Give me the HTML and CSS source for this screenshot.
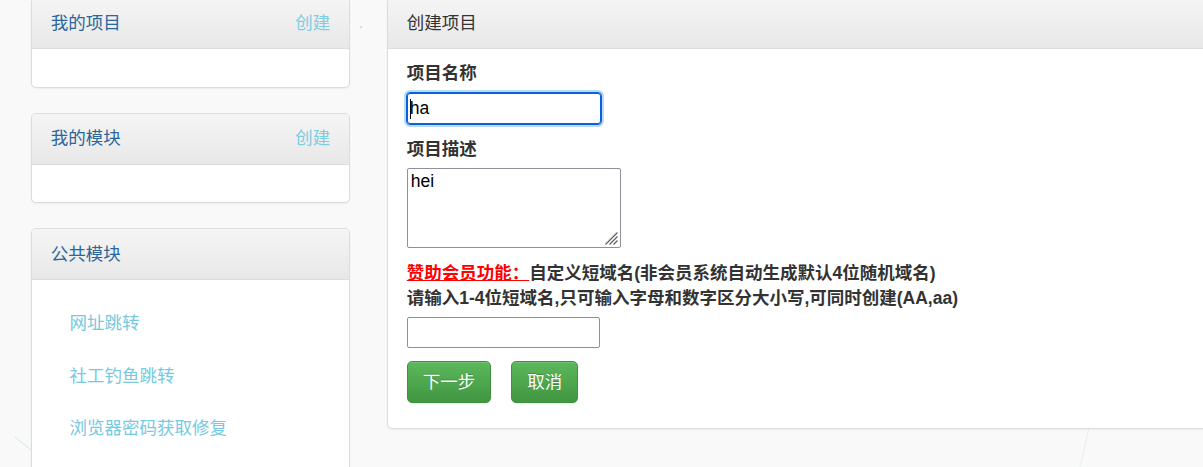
FILE: index.html
```html
<!DOCTYPE html>
<html lang="zh-CN">
<head>
<meta charset="utf-8">
<title>创建项目</title>
<link rel="stylesheet" href="styles.css">
</head>
<body>
<svg class="bg" width="1203" height="467" viewBox="0 0 1203 467" aria-hidden="true">
  <circle cx="361" cy="27" r="0.8" fill="#b9b9b9"/>
  <line x1="15" y1="437" x2="31" y2="450" stroke="#cfe9dc" stroke-width="1"/>
  <line x1="1089" y1="428" x2="1080" y2="467" stroke="#e4f1ee" stroke-width="1"/>
</svg>
<div class="page">
  <aside class="side">
    <section class="panel">
      <div class="panel-heading">
        <span class="side-title">我的项目</span>
        <a class="create">创建</a>
      </div>
      <div class="panel-body"></div>
    </section>
    <section class="panel">
      <div class="panel-heading">
        <span class="side-title">我的模块</span>
        <a class="create">创建</a>
      </div>
      <div class="panel-body"></div>
    </section>
    <section class="panel">
      <div class="panel-heading">
        <span class="side-title">公共模块</span>
      </div>
      <div class="panel-body">
        <ul class="nav">
          <li><a class="nav-link">网址跳转</a></li>
          <li><a class="nav-link">社工钓鱼跳转</a></li>
          <li><a class="nav-link">浏览器密码获取修复</a></li>
        </ul>
      </div>
    </section>
  </aside>
  <main class="main">
    <section class="panel main-panel">
      <div class="panel-heading">
        <span class="main-title">创建项目</span>
      </div>
      <div class="form-body">
        <label class="label">项目名称</label>
        <span class="field-wrap">
          <input class="input input-focus" type="text" value="ha">
          <span class="caret"></span>
        </span>
        <label class="label label-second">项目描述</label>
        <span class="field-wrap">
          <textarea class="textarea">hei</textarea>
          <svg class="grip" width="14" height="14" viewBox="0 0 14 14" aria-hidden="true">
            <line x1="13.5" y1="1.5" x2="1.5" y2="13.5" stroke="#5a5a5a" stroke-width="1.1"/>
            <line x1="13.5" y1="5.5" x2="5.5" y2="13.5" stroke="#5a5a5a" stroke-width="1.1"/>
            <line x1="13.5" y1="9.5" x2="9.5" y2="13.5" stroke="#5a5a5a" stroke-width="1.1"/>
            <line x1="11.5" y1="1.5" x2="-0.5" y2="13.5" stroke="#c8c8c8" stroke-width="0.8" stroke-dasharray="1 1"/>
          </svg>
        </span>
        <p class="note"><span class="vip">赞助会员功能：</span>自定义短域名(非会员系统自动生成默认4位随机域名)<br>请输入1-4位短域名,只可输入字母和数字区分大小写,可同时创建(AA,aa)</p>
        <input class="input input-short" type="text" value="">
        <div class="actions">
          <button class="btn" type="button">下一步</button>
          <button class="btn" type="button">取消</button>
        </div>
      </div>
    </section>
  </main>
</div>
</body>
</html>
```

FILE: styles.css
```css
html, body {
  margin: 0;
  padding: 0;
  overflow: hidden;
}
body {
  background: #f9f9f9;
  font-family: "Liberation Sans", "Noto Sans CJK SC", sans-serif;
  font-size: 17.5px;
  line-height: 25px;
  color: #333;
  width: 1203px;
  height: 467px;
}
.bg {
  position: absolute;
  left: 0;
  top: 0;
  z-index: -1;
}
.page {
  display: flex;
  align-items: flex-start;
  gap: 37px;
  padding-left: 31px;
  margin-top: -3px;
}
.side {
  width: 319px;
  flex: none;
  display: flex;
  flex-direction: column;
  gap: 25px;
}
.main {
  flex: none;
  width: 860px;
}
.panel {
  background: #fff;
  border: 1px solid #dcdcdc;
  border-radius: 5px;
  box-shadow: 0 1px 2px rgba(0, 0, 0, 0.05);
  overflow: hidden;
}
.panel-heading {
  display: flex;
  justify-content: space-between;
  align-items: center;
  padding: 12.5px 18.75px;
  height: 25px;
  background: linear-gradient(to bottom, #f5f5f5 0, #e8e8e8 100%);
  border-bottom: 1px solid #dcdcdc;
}
.side-title {
  color: #2b669a;
}
.create {
  color: #7dcde2;
}
.main-title {
  color: #333;
}
.panel-body {
  padding: 18.75px;
}
.nav {
  list-style: none;
  margin: 0;
  padding: 0;
  display: flex;
  flex-direction: column;
  gap: 2.5px;
}
.nav-link {
  display: block;
  padding: 12.5px 18.75px;
  color: #76c9df;
}
.form-body {
  display: flex;
  flex-direction: column;
  align-items: flex-start;
  padding: 12px 18.75px 25px;
}
.label {
  display: block;
  font-weight: bold;
  margin-bottom: 7px;
}
.label-second {
  margin-top: 12.5px;
  margin-bottom: 6.5px;
}
.field-wrap {
  position: relative;
  display: block;
}
.input {
  display: block;
  box-sizing: border-box;
  width: 194px;
  height: 31px;
  margin: 0;
  padding: 1px 2px;
  border: 1px solid #8f8f9d;
  border-radius: 2px;
  font-family: "Liberation Sans", "Noto Sans CJK SC", sans-serif;
  font-size: 17.5px;
  color: #000;
  background: #fff;
  outline: none;
}
.input-focus {
  border-color: #0b5fd8;
  border-radius: 3px;
  outline: 1px solid #0b5fd8;
  box-shadow: 0 0 0 3px #b9dcf6;
}
.caret {
  position: absolute;
  left: 3.5px;
  top: 6px;
  width: 1px;
  height: 20px;
  background: #000;
}
.textarea {
  display: block;
  box-sizing: border-box;
  width: 214px;
  height: 80px;
  margin: 0;
  padding: 2px 3px;
  border: 1px solid #8f8f9d;
  border-radius: 2px;
  font-family: "Liberation Sans", "Noto Sans CJK SC", sans-serif;
  font-size: 17.5px;
  line-height: 20px;
  color: #000;
  background: #fff;
  resize: none;
}
.grip {
  position: absolute;
  right: 3px;
  bottom: 3px;
}
.note {
  margin: 12.5px 0 6.5px;
  font-weight: bold;
  color: #333;
  white-space: nowrap;
}
.vip {
  color: #ff0000;
  text-decoration: underline;
}
.input-short {
  width: 193px;
}
.actions {
  display: flex;
  gap: 20px;
  margin-top: 13px;
}
.btn {
  height: 42px;
  margin: 0;
  padding: 7.5px 15px;
  border: 1px solid #3e8f3e;
  border-radius: 5px;
  background: linear-gradient(to bottom, #5cb85c 0, #419641 100%);
  box-shadow: inset 0 1px 0 rgba(255, 255, 255, 0.15), 0 1px 1px rgba(0, 0, 0, 0.075);
  color: #fff;
  text-shadow: 0 -1px 0 rgba(0, 0, 0, 0.2);
  font-family: "Liberation Sans", "Noto Sans CJK SC", sans-serif;
  font-size: 17.5px;
  line-height: 25px;
  cursor: pointer;
}
```
